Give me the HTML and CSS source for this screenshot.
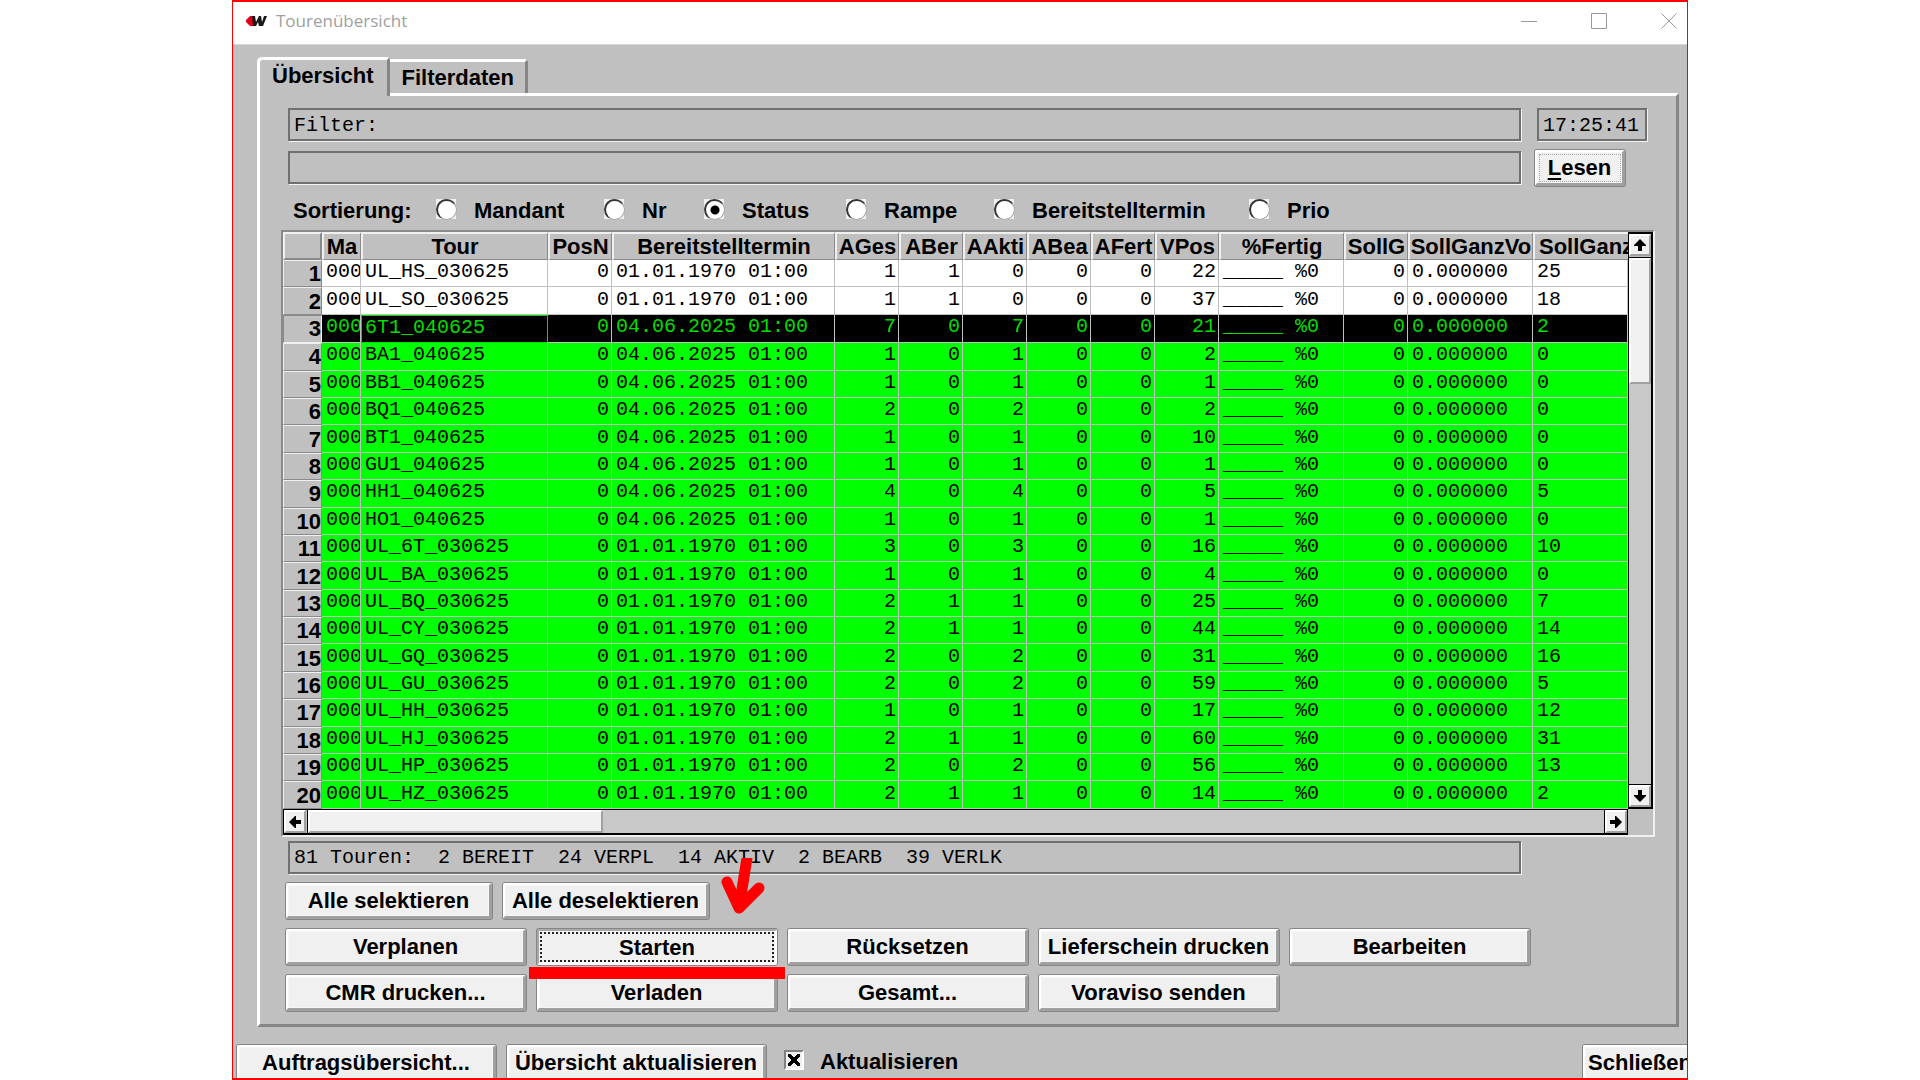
FILE: index.html
```html
<!DOCTYPE html>
<html lang="de">
<head>
    <meta charset="UTF-8">
    <meta name="viewport" content="width=device-width, initial-scale=1.0">
    <title>Tourenübersicht</title>
    <link rel="stylesheet" href="styles.css">
</head>
<body>
    <div class="window">
        <header class="titlebar">
            <svg class="app-logo" viewBox="0 0 21 12" aria-hidden="true">
                <path d="M4 1h5v10H4L0 7V5z" fill="#e2001a"/>
                <path d="M6 1h3l1 6 3-6h2l1 6 2-6h3l-4 10h-4l-1-4-2 4H7z" fill="#1a1a1a"/>
            </svg>
            <h1 class="title">Tourenübersicht</h1>
            <div class="window-controls">
                <button class="window-btn" aria-label="Minimieren">
                    <svg viewBox="0 0 16 16"><path d="M0 8.500h16"/></svg>
                </button>
                <button class="window-btn" aria-label="Maximieren">
                    <svg viewBox="0 0 16 16"><path d="M.5.5h15v15H.5z"/></svg>
                </button>
                <button class="window-btn" aria-label="Fenster schließen">
                    <svg viewBox="0 0 16 16"><path d="M.5.5l15 15M15.500.5l-15 15"/></svg>
                </button>
            </div>
        </header>

        <main class="content">
            <div class="tabs" role="tablist">
                <button class="tab active" role="tab" aria-selected="true">Übersicht</button>
                <button class="tab" role="tab" aria-selected="false">Filterdaten</button>
            </div>

            <section class="panel" role="tabpanel">
                <div class="filter-row">
                    <input class="field" type="text" value="Filter:" aria-label="Filter" readonly>
                    <input class="field clock" type="text" value="17:25:41" aria-label="Uhrzeit" readonly>
                </div>
                <div class="filter-row">
                    <input class="field" type="text" value="" aria-label="Filterzusatz" readonly>
                    <div class="read-box">
                        <button class="btn read-btn"><u>L</u>esen</button>
                    </div>
                </div>

                <div class="sorting" role="radiogroup" aria-labelledby="sort-title">
                    <span id="sort-title">Sortierung:</span>
                    <label class="option"><input type="radio" name="sort">Mandant</label>
                    <label class="option"><input type="radio" name="sort">Nr</label>
                    <label class="option"><input type="radio" name="sort" checked>Status</label>
                    <label class="option"><input type="radio" name="sort">Rampe</label>
                    <label class="option"><input type="radio" name="sort">Bereitstelltermin</label>
                    <label class="option"><input type="radio" name="sort">Prio</label>
                </div>

                <div class="grid-frame">
                    <div class="table-view">
                        <table class="tours">
                            <colgroup>
                                <col class="c-row"><col class="c-ma"><col class="c-tour"><col class="c-num">
                                <col class="c-date"><col class="c-num"><col class="c-num"><col class="c-num">
                                <col class="c-num"><col class="c-num"><col class="c-num"><col class="c-wide">
                                <col class="c-num"><col class="c-wide"><col>
                            </colgroup>
                            <thead>
                                <tr>
                                    <th class="corner"></th>
                                    <th>Ma</th>
                                    <th>Tour</th>
                                    <th>PosN</th>
                                    <th>Bereitstelltermin</th>
                                    <th>AGes</th>
                                    <th>ABer</th>
                                    <th>AAkti</th>
                                    <th>ABea</th>
                                    <th>AFert</th>
                                    <th>VPos</th>
                                    <th>%Fertig</th>
                                    <th>SollG</th>
                                    <th>SollGanzVo</th>
                                    <th class="cut">SollGanz</th>
                                </tr>
                            </thead>
                            <tbody id="tour-rows"></tbody>
                        </table>
                    </div>
                    <div class="scroll vertical">
                        <button class="scroll-btn" aria-label="Nach oben">
                            <svg viewBox="0 0 12 12"><path d="M6 0l6 6v1H8v5H4V7H0V6z"/></svg>
                        </button>
                        <div class="thumb"></div>
                        <div class="track"></div>
                        <button class="scroll-btn" aria-label="Nach unten">
                            <svg viewBox="0 0 12 12"><path d="M6 12l6-6V5H8V0H4v5H0v1z"/></svg>
                        </button>
                    </div>
                    <div class="scroll horizontal">
                        <button class="scroll-btn" aria-label="Nach links">
                            <svg viewBox="0 0 12 12"><path d="M0 6l6-6h1v4h5v4H7v4H6z"/></svg>
                        </button>
                        <div class="thumb"></div>
                        <div class="track"></div>
                        <button class="scroll-btn" aria-label="Nach rechts">
                            <svg viewBox="0 0 12 12"><path d="M12 6L6 0H5v4H0v4h5v4h1z"/></svg>
                        </button>
                    </div>
                </div>

                <div class="field summary">81 Touren:  2 BEREIT  24 VERPL  14 AKTIV  2 BEARB  39 VERLK</div>

                <div class="select-actions">
                    <button class="btn">Alle selektieren</button>
                    <button class="btn">Alle deselektieren</button>
                </div>
                <div class="actions">
                    <button class="btn">Verplanen</button>
                    <button class="btn pressed">Starten</button>
                    <button class="btn">Rücksetzen</button>
                    <button class="btn">Lieferschein drucken</button>
                    <button class="btn">Bearbeiten</button>
                    <button class="btn">CMR drucken...</button>
                    <button class="btn">Verladen</button>
                    <button class="btn">Gesamt...</button>
                    <button class="btn">Voraviso senden</button>
                </div>

                <!-- red hint for the start button -->
                <svg class="hint-arrow" viewBox="0 0 44 58" aria-hidden="true">
                    <path d="M26 0L18 50M6 24l12 26 20-20"/>
                </svg>
                <div class="hint-line"></div>
            </section>
        </main>

        <footer class="footer">
            <button class="btn">Auftragsübersicht...</button>
            <button class="btn">Übersicht aktualisieren</button>
            <label class="option check"><input type="checkbox" checked>Aktualisieren</label>
            <button class="btn close-btn">Schließen</button>
        </footer>
    </div>

    <script src="script.js"></script>
</body>
</html>
```

FILE: styles.css
```css
* {
    margin: 0;
    padding: 0;
    box-sizing: border-box;
}

body {
    background: #fff;
    font-family: "Liberation Sans", Arial, sans-serif;
    font-size: 22px;
    font-weight: bold;
    line-height: 24px;
    color: #000;
    overflow: hidden;
}

button, input {
    font: inherit;
    color: inherit;
}

.window {
    display: flex;
    flex-direction: column;
    width: calc(100% - 464px);
    height: 100vh;
    margin: 0 auto;
    border: 1px solid #f00;
    border-width: 2px 1px;
    background: #c0c0c0;
    overflow: hidden;
}

/* title bar */
.titlebar {
    display: flex;
    flex: none;
    align-items: center;
    height: 43px;
    padding: 0 10px 5px 13px;
    border-bottom: 1px solid #d8d8d8;
    background: #fff;
}

.app-logo {
    width: 21px;
    height: 12px;
    margin-right: 9px;
}

.title {
    flex: 1;
    font-family: "Open Sans", "Noto Sans", sans-serif;
    font-size: 17px;
    font-weight: normal;
    color: #a0a0a0;
}

.window-controls {
    display: flex;
    gap: 54px;
}

.window-btn {
    display: flex;
    border: none;
    background: none;
}

.window-btn svg {
    width: 16px;
    height: 16px;
    fill: none;
    stroke: #999;
}

/* tabs */
.content {
    display: flex;
    flex: none;
    flex-direction: column;
    padding: 12px 8px 0 24px;
}

.tabs {
    display: flex;
    align-items: flex-end;
}

.tab {
    height: 34px;
    padding: 0 11px;
    border: 3px solid #fff;
    border-right-color: #858585;
    border-bottom: none;
    border-left: none;
    border-radius: 0 4px 0 0;
    background: #c0c0c0;
}

.tab.active {
    z-index: 1;
    height: 39px;
    margin-bottom: -3px;
    padding: 0 14px 4px 12px;
    border-left: 3px solid #fff;
    border-radius: 5px 4px 0 0;
}

.panel {
    position: relative;
    padding: 12px 24px 13px 28px;
    border: 3px solid #fff;
    border-right-color: #858585;
    border-bottom-color: #858585;
}

/* filter */
.filter-row {
    display: grid;
    grid-template-columns: 1fr 110px;
    gap: 16px;
    margin: 0 5px 10px 0;
}

.field {
    width: 100%;
    height: 33px;
    padding: 1px 4px 0;
    border: 2px solid #707070;
    background: #c0c0c0;
    box-shadow: 1px 1px 0 #f4f4f4;
    font-family: "Liberation Mono", "Courier New", monospace;
    font-size: 20px;
    font-weight: normal;
    outline: none;
}

.read-box {
    display: flex;
    margin: -1px 0 -2px -2px;
}

.read-btn {
    width: 90px;
    outline: 1px dotted #aaa;
    outline-offset: -5px;
}

.read-btn u {
    text-underline-offset: 3px;
}

/* sorting */
.sorting {
    display: grid;
    grid-template-columns: 143px 168px 100px 142px 148px 255px auto;
    align-items: center;
    height: 37px;
    padding: 0 0 4px 5px;
}

.option {
    display: flex;
    align-items: center;
    gap: 18px;
    white-space: nowrap;
}

.option input {
    display: grid;
    place-items: center;
    flex: none;
    width: 20px;
    height: 20px;
    margin-bottom: 4px;
    appearance: none;
    background: #f0f0f0;
}

.option input[type="radio"]::before {
    content: "";
    width: 18px;
    height: 18px;
    border: 2px solid #333;
    border-right: 1px solid #aaa;
    border-bottom: 1px solid #aaa;
    border-radius: 50%;
    background: #fff;
}

.option input[type="radio"]:checked::before {
    background: radial-gradient(circle, #000 4px, #fff 5px);
}

/* table with its scrollbars */
.grid-frame {
    display: grid;
    grid-template-columns: 1fr 25px;
    grid-template-rows: auto 26px;
    margin: -1px -3px 0 -7px;
    border: 2px solid #8a8a8a;
    border-right-color: #f0f0f0;
    border-bottom-color: #f0f0f0;
}

.table-view {
    overflow: hidden;
}

.tours {
    width: 100%;
    height: 577px;
    table-layout: fixed;
    border-collapse: separate;
    border-spacing: 0;
}

.c-row { width: 39px; }
.c-ma { width: 39px; }
.c-tour { width: 187px; }
.c-num { width: 64px; }
.c-date { width: 223px; }
.c-wide { width: 125px; }

.tours th {
    height: 28px;
    overflow: hidden;
    border: 2px solid #f0f0f0;
    border-right: 1px solid #8a8a8a;
    border-bottom: 1px solid #8a8a8a;
    background: #c0c0c0;
    line-height: 23px;
    white-space: nowrap;
}

.tours th.cut {
    padding-left: 4px;
    border-right: none;
    text-align: left;
}

.tours th.corner {
    border-right-width: 2px;
    border-bottom-width: 2px;
}

.tours tbody th {
    height: auto;
    padding-top: 1px;
    border-width: 1px;
    text-align: right;
    line-height: 22px;
}

.tours td {
    overflow: hidden;
    padding: 0 2px 2px 4px;
    border-right: 1px solid #c0c0c0;
    border-bottom: 1px solid #c0c0c0;
    font-family: "Liberation Mono", "Courier New", monospace;
    font-size: 20px;
    font-weight: normal;
    line-height: 24px;
    white-space: pre;
    text-overflow: clip;
}

.tours .num {
    text-align: right;
}

.ready td {
    background: #fff;
}

.planned td {
    background: #0f0;
}

.selected td {
    background: #000;
    color: #0d0;
}

.selected td.tour {
    border: 1px solid #0d0;
    padding-left: 3px;
}

.tours .selected th {
    border-color: #8a8a8a #f0f0f0 #f0f0f0 #8a8a8a;
}

.scroll {
    display: flex;
    border: 1px solid #000;
}

.scroll.vertical {
    flex-direction: column;
    border-width: 2px 2px 2px 1px;
}

.scroll.horizontal {
    border-width: 1px 1px 2px;
}

.scroll-btn {
    display: flex;
    flex: none;
    align-items: center;
    justify-content: center;
    width: 22px;
    height: 22px;
    border: 2px solid #fff;
    border-right-color: #a0a0a0;
    border-bottom-color: #a0a0a0;
    background: #f0f0f0;
}

.scroll-btn svg {
    width: 12px;
    height: 12px;
}

.horizontal .scroll-btn {
    height: 23px;
}

.thumb {
    border: 2px solid #fff;
    border-right-color: #a0a0a0;
    border-bottom-color: #a0a0a0;
    outline: 1px solid #000;
    background: #f0f0f0;
}

.vertical .thumb {
    flex: 0 0 22%;
    margin-top: 2px;
}

.horizontal .thumb {
    flex: 0 0 22%;
    margin-left: 2px;
}

.track {
    flex: 1;
    background: #c8c8c8;
}

.vertical .track {
    border-bottom: 1px solid #000;
}

.horizontal .track {
    border-right: 1px solid #000;
}

.summary {
    width: calc(100% - 131px);
    margin: 4px 0 9px;
    padding: 0 4px;
    line-height: 29px;
    white-space: pre;
}

/* buttons */
.btn {
    height: 36px;
    border: 2px solid #fff;
    border-right: 3px solid #a0a0a0;
    border-bottom: 3px solid #a0a0a0;
    border-radius: 2px;
    background: #f0f0f0;
    box-shadow: inset 0 0 0 1px #f6f6f6, 0 0 0 1px #858585;
    white-space: nowrap;
}

.btn.pressed {
    padding-top: 2px;
    border: 2px solid #a8a8a8;
    border-right-color: #fff;
    border-bottom-color: #fff;
    outline: 2px dotted #222;
    outline-offset: -5px;
}

.select-actions {
    display: grid;
    grid-template-columns: 206px 206px;
    gap: 11px;
    margin: 0 0 10px -2px;
}

.actions {
    display: grid;
    grid-template-columns: repeat(5, 240px);
    gap: 10px 11px;
    margin-left: -2px;
}

/* hint marks lie over the summary and the buttons */
.hint-arrow {
    position: absolute;
    left: 461px;
    bottom: 108px;
    width: 44px;
    height: 58px;
    fill: none;
    stroke: #f00;
    stroke-width: 11px;
    stroke-linecap: round;
    stroke-linejoin: round;
}

.hint-line {
    position: absolute;
    left: 269px;
    bottom: 45px;
    width: 256px;
    height: 12px;
    background: #f00;
}

/* footer */
.footer {
    display: flex;
    flex: none;
    align-items: flex-start;
    gap: 11px;
    padding: 18px 0 0 4px;
}

.footer .btn {
    flex: none;
    width: 259px;
}

.check {
    margin: 5px 0 0 7px;
    gap: 16px;
}

.check input {
    border: 2px solid #808080;
    border-right-color: #fff;
    border-bottom-color: #fff;
}

.check input:checked {
    background: linear-gradient(45deg, transparent 40%, #000 40%, #000 60%, transparent 60%) center / 12px 12px no-repeat,
        linear-gradient(-45deg, transparent 40%, #000 40%, #000 60%, transparent 60%) center / 12px 12px no-repeat,
        #f0f0f0;
}

.footer .close-btn {
    width: 115px;
    margin: 0 -11px 0 auto;
}
```

FILE: script.js
```js
// tour, date, AGes, ABer, AAkti, VPos, SollGanz
const JUNE = '04.06.2025 01:00';
const EMPTY = '01.01.1970 01:00';

const tours = [
    ['UL_HS_030625', EMPTY, 1, 1, 0, 22, 25],
    ['UL_SO_030625', EMPTY, 1, 1, 0, 37, 18],
    ['6T1_040625', JUNE, 7, 0, 7, 21, 2],
    ['BA1_040625', JUNE, 1, 0, 1, 2, 0],
    ['BB1_040625', JUNE, 1, 0, 1, 1, 0],
    ['BQ1_040625', JUNE, 2, 0, 2, 2, 0],
    ['BT1_040625', JUNE, 1, 0, 1, 10, 0],
    ['GU1_040625', JUNE, 1, 0, 1, 1, 0],
    ['HH1_040625', JUNE, 4, 0, 4, 5, 5],
    ['HO1_040625', JUNE, 1, 0, 1, 1, 0],
    ['UL_6T_030625', EMPTY, 3, 0, 3, 16, 10],
    ['UL_BA_030625', EMPTY, 1, 0, 1, 4, 0],
    ['UL_BQ_030625', EMPTY, 2, 1, 1, 25, 7],
    ['UL_CY_030625', EMPTY, 2, 1, 1, 44, 14],
    ['UL_GQ_030625', EMPTY, 2, 0, 2, 31, 16],
    ['UL_GU_030625', EMPTY, 2, 0, 2, 59, 5],
    ['UL_HH_030625', EMPTY, 1, 0, 1, 17, 12],
    ['UL_HJ_030625', EMPTY, 2, 1, 1, 60, 31],
    ['UL_HP_030625', EMPTY, 2, 0, 2, 56, 13],
    ['UL_HZ_030625', EMPTY, 2, 1, 1, 14, 2]
];

const selected = 2;

function cell(value, name = '') {
    return `<td class="${name}">${value}</td>`;
}

document.getElementById('tour-rows').innerHTML = tours.map((t, i) => {
    const state = i === selected ? 'selected' : i < 2 ? 'ready' : 'planned';
    return `<tr class="${state}"><th scope="row">${i + 1}</th>` +
        cell('000') + cell(t[0], 'tour') + cell(0, 'num') + cell(t[1]) +
        cell(t[2], 'num') + cell(t[3], 'num') + cell(t[4], 'num') +
        cell(0, 'num') + cell(0, 'num') + cell(t[5], 'num') +
        cell('_____ %0') + cell(0, 'num') + cell('0.000000') + cell(t[6]) +
        '</tr>';
}).join('');
```
